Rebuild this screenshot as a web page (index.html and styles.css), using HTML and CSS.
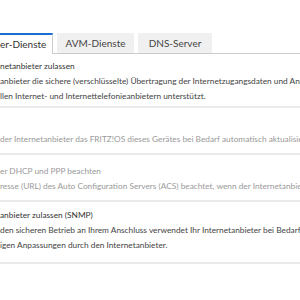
FILE: index.html
```html
<!DOCTYPE html>
<html lang="de">

    <head>
        <meta charset="UTF-8">
        <meta name="viewport" content="width=device-width, initial-scale=1.0">
        <title>Anbieter-Dienste</title>
        <link rel="stylesheet" href="styles.css">
    </head>

    <body>
        <div class="tabs">
            <div class="tab active">er-Dienste</div>
            <div class="tab avm">AVM-Dienste</div>
            <div class="tab dns">DNS-Server</div>
        </div>

        <div class="section first">
            <div class="title">netanbieter zulassen</div>
            <div class="desc">anbieter die sichere (verschlüsselte) Übertragung der Internetzugangsdaten und Anschl</div>
            <div class="desc">llen Internet- und Internettelefonieanbietern unterstützt.</div>
        </div>

        <div class="section off">
            <div class="title">&nbsp;</div>
            <div class="desc">der Internetanbieter das FRITZ!OS dieses Gerätes bei Bedarf automatisch aktualisieren</div>
        </div>

        <div class="section off">
            <div class="title">er DHCP und PPP beachten</div>
            <div class="desc">resse (URL) des Auto Configuration Servers (ACS) beachtet, wenn der Internetanbieter</div>
        </div>

        <div class="section last">
            <div class="title">anbieter zulassen (SNMP)</div>
            <div class="desc">den sicheren Betrieb an Ihrem Anschluss verwendet Ihr Internetanbieter bei Bedarf</div>
            <div class="desc">igen Anpassungen durch den Internetanbieter.</div>
        </div>
    </body>

</html>
```

FILE: styles.css
```css
body {
    margin: 0;
    width: 300px;
    overflow: hidden;
    font-family: Lato, "Liberation Sans", sans-serif;
    font-size: 10px;
    color: #444;
    background: #fff;
}

.tabs {
    display: flex;
    gap: 4px;
    margin-top: 33px;
    border-bottom: 1px solid #ccc;
    height: 20px;
}

.tab {
    box-sizing: border-box;
    height: 20px;
    line-height: 20px;
    text-align: center;
    background: #f0f0f0;
    color: #444;
    white-space: nowrap;
}

.tab.avm {
    width: 77px;
}

.tab.dns {
    width: 74px;
}

.tab.active {
    width: 53px;
    height: 21px;
    line-height: 18px;
    padding-right: 12px;
    text-align: right;
    background: #fff;
    color: #333;
    border-top: 2px solid #1a6ed0;
    border-right: 1px solid #ccc;
}

.section {
    padding: 9px 0 6px;
    border-bottom: 2px solid #ebebeb;
    font-size: 8.3px;
    line-height: 15px;
    white-space: nowrap;
}

.section.first {
    padding: 5px 0 2px;
}

.section.last {
    padding: 6px 0 9px;
}

.title {
    color: #333;
}

.off,
.off .title {
    color: #999;
}
```
